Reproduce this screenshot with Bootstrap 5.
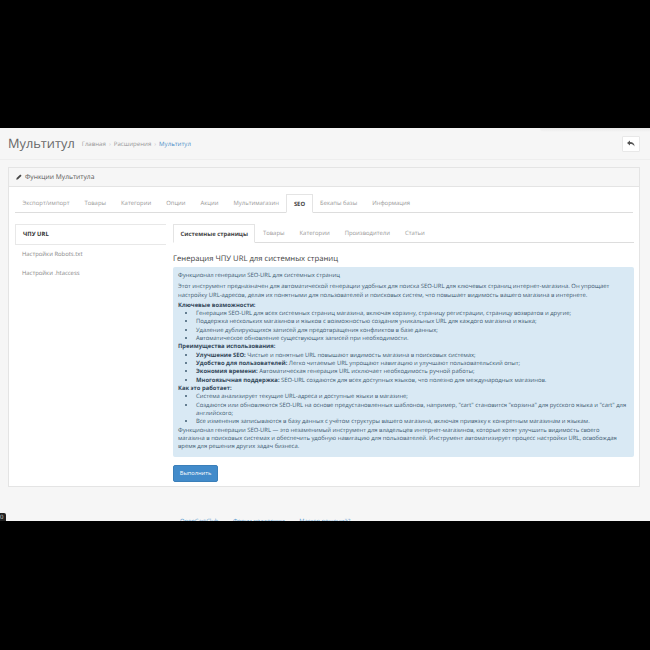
<!DOCTYPE html>
<html lang="ru"><head><meta charset="utf-8"><title>Мультитул</title>
<link rel="stylesheet" href="https://cdn.jsdelivr.net/npm/bootstrap@5.3.0/dist/css/bootstrap.min.css">
<style>
html,body{height:650px;overflow:hidden;background:#000;margin:0}
body{font-family:"Open Sans",sans-serif;font-size:5.9px;color:#666;text-rendering:geometricPrecision}
.shot{margin-top:128px;height:393px;background:#f6f6f6;overflow:hidden;position:relative}
.topbar{height:32px;padding:0 10px 0 8px;border-bottom:1px solid #eee}
.topbar h1{font-size:12.8px;font-weight:400;color:#666;margin:0 7px 0 0;line-height:1}
.crumb{font-size:6.1px;color:#999;display:flex;gap:3px}
.crumb b{font-weight:400;color:#ccc}
.crumb a{color:#4d90c9;text-decoration:none}
.backbtn{width:18px;height:16px;background:#fff;border:1px solid #e8e8e8;border-radius:1px;padding:0}
.pnl{margin:7px 10px 0 8px;height:320px;background:#fff;border:1px solid #e4e4e4}
.pnl-head{height:19px;background:#f6f6f6;border-bottom:1px solid #e4e4e4;padding-left:7px;font-size:6.7px;color:#555;gap:3px}
.pnl-body{padding:7px 6px 0 6px}
.tabline{border-bottom:1px solid #ddd;height:19px;list-style:none;margin:0;padding:0}
.tabline li{padding:0 7.5px;height:19px;line-height:18px;color:#999;white-space:nowrap}
.tabline li.act{background:#fff;border:1px solid #e4e4e4;border-bottom-color:#fff;color:#444;font-weight:700;margin-bottom:-1px;padding:0 6.5px;margin-right:0}
.cols{margin-top:11px}
.side{width:151px;flex:none}
.side div{height:19px;line-height:18px;padding-left:7px;color:#888}
.side .on{height:21px;line-height:19px;border:1px solid #e8e8e8;border-right:0;color:#333;font-weight:700}
.rhs{margin-left:7px;width:461px;flex:none}
.rhs h2{font-size:7.7px;font-weight:400;color:#444;margin:10px 0 2px;line-height:12px}
.note{background:#d9e9f4;border-radius:2px;padding:4px 7.7px 0 5px;height:190px;color:#3d5a70;font-size:5.85px;line-height:8.35px}
.note p{margin:0}
.note .first{margin-bottom:3px}
.note .second{margin-bottom:1.6px}
.note .st{color:#33485a;font-weight:700}
.note strong{color:#33485a;font-weight:700}
.note ul{margin:0;padding-left:18px}
.runbtn{margin-top:8px;width:45px;height:17px;background:#428bca;border:1px solid #3b7fb9;border-radius:2px;color:#fff;font-size:5.7px;padding:0;display:block}
.foot{position:absolute;left:180px;top:389px;display:flex;gap:14.500px;font-size:5.8px;line-height:9px;color:#5a9bd0;white-space:nowrap}
.foot a{color:inherit;text-decoration:underline}
.fab{position:absolute;left:0;top:385px;width:6px;height:8px;background:#222;border-radius:0 2px 0 0;color:#ddd;font-size:6px;line-height:8px}
.shade{position:absolute;right:0;top:0;width:110px;height:4px;background:linear-gradient(#e8e8e8,#f6f6f6);border-radius:0 0 0 8px}
</style></head><body>
<div class="shot">
<div class="shade"></div>
<div class="topbar d-flex align-items-center">
<h1>Мультитул</h1>
<div class="crumb"><span>Главная</span><b>›</b><span>Расширения</span><b>›</b><a href="#">Мультитул</a></div>
<button class="backbtn ms-auto d-flex align-items-center justify-content-center" aria-label="Назад"><svg width="8" height="7" viewBox="0 0 16 14"><path fill="#555" d="M6 1 0 6l6 5V8c4 0 7 1 9 5 0-6-3-9-9-9z"/></svg></button>
</div>
<div class="pnl">
<div class="pnl-head d-flex align-items-center"><svg width="6" height="6" viewBox="0 0 12 12"><path fill="#444" d="M8.5.8 11.2 3.500 4 10.700.5 11.500 1.300 8z"/></svg><span>Функции Мультитула</span></div>
<div class="pnl-body">
<ul class="tabline d-flex">
<li>Экспорт/импорт</li><li>Товары</li><li>Категории</li><li>Опции</li><li>Акции</li><li>Мультимагазин</li><li class="act">SEO</li><li>Бекапы базы</li><li>Информация</li>
</ul>
<div class="cols d-flex">
<div class="side"><div class="on">ЧПУ URL</div><div>Настройки Robots.txt</div><div>Настройки .htaccess</div></div>
<div class="rhs">
<ul class="tabline d-flex">
<li class="act">Системные страницы</li><li>Товары</li><li>Категории</li><li>Производители</li><li>Статьи</li>
</ul>
<h2>Генерация ЧПУ URL для системных страниц</h2>
<div class="note">
<p class="first">Функционал генерации SEO-URL для системных страниц</p>
<p class="second">Этот инструмент предназначен для автоматической генерации удобных для поиска SEO-URL для ключевых страниц интернет-магазина. Он упрощает настройку URL-адресов, делая их понятными для пользователей и поисковых систем, что повышает видимость вашего магазина в интернете.</p>
<p class="st">Ключевые возможности:</p>
<ul>
<li>Генерация SEO-URL для всех системных страниц магазина, включая корзину, страницу регистрации, страницу возвратов и другие;</li>
<li>Поддержка нескольких магазинов и языков с возможностью создания уникальных URL для каждого магазина и языка;</li>
<li>Удаление дублирующихся записей для предотвращения конфликтов в базе данных;</li>
<li>Автоматическое обновление существующих записей при необходимости.</li>
</ul>
<p class="st">Преимущества использования:</p>
<ul>
<li><strong>Улучшение SEO:</strong> Чистые и понятные URL повышают видимость магазина в поисковых системах;</li>
<li><strong>Удобство для пользователей:</strong> Легко читаемые URL упрощают навигацию и улучшают пользовательский опыт;</li>
<li><strong>Экономия времени:</strong> Автоматическая генерация URL исключает необходимость ручной работы;</li>
<li><strong>Многоязычная поддержка:</strong> SEO-URL создаются для всех доступных языков, что полезно для международных магазинов.</li>
</ul>
<p class="st">Как это работает:</p>
<ul>
<li>Система анализирует текущие URL-адреса и доступные языки в магазине;</li>
<li>Создаются или обновляются SEO-URL на основе предустановленных шаблонов, например, "cart" становится "корзина" для русского языка и "cart" для английского;</li>
<li>Все изменения записываются в базу данных с учётом структуры вашего магазина, включая привязку к конкретным магазинам и языкам.</li>
</ul>
<p>Функционал генерации SEO-URL — это незаменимый инструмент для владельцев интернет-магазинов, которые хотят улучшить видимость своего магазина в поисковых системах и обеспечить удобную навигацию для пользователей. Инструмент автоматизирует процесс настройки URL, освобождая время для решения других задач бизнеса.</p>
</div>
<button class="runbtn">Выполнить</button>
</div>
</div>
</div>
</div>
<div class="foot"><a href="#">OpenCartClub</a><a href="#">Форум поддержки</a><a href="#">Мастер решений?</a></div>
<div class="fab">0</div>
</div>
</body></html>
